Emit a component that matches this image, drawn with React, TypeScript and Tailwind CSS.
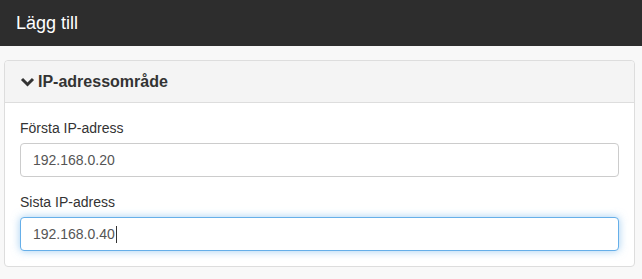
import React from "react";

export default function App() {
  return (
    <div className="w-[642px] h-[279px] bg-[#f8f8f8] text-[#333] overflow-hidden" style={{ fontFamily: '"Liberation Sans", Arial, sans-serif' }}>
      <div className="h-[46px] bg-[#2d2d2d] flex items-center px-4">
        <h1 className="text-white text-[18px] leading-none">Lägg till</h1>
      </div>
      <div className="ml-[4px] mr-[7px] mt-[14px] border border-[#ddd] rounded-[4px] bg-white">
        <div className="h-[42px] bg-[#f4f4f4] border-b border-[#ddd] rounded-t-[4px] flex items-center px-[15px] gap-[3px]">
          <svg width="15" height="12" viewBox="0 0 15 12" className="mt-[1px]">
            <polyline points="2,3 7.5,8.5 13,3" fill="none" stroke="#333" strokeWidth="3" strokeLinecap="butt" strokeLinejoin="miter" />
          </svg>
          <span className="text-[16px] font-bold">IP-adressområde</span>
        </div>
        <div className="px-[15px] pt-[15px] pb-[15px]">
          <label className="block text-[14px] leading-[20px] mb-[5px]">Första IP-adress</label>
          <div className="h-[34px] border border-[#ccc] rounded-[4px] px-[12px] flex items-center text-[14px] text-[#555] bg-white">
            192.168.0.20
          </div>
          <label className="block text-[14px] leading-[20px] mt-[15px] mb-[5px]">Sista IP-adress</label>
          <div className="h-[34px] border border-[#66afe9] rounded-[4px] px-[12px] flex items-center text-[14px] text-[#555] bg-white shadow-[0_0_8px_rgba(102,175,233,0.6)]">
            <span>192.168.0.40</span>
            <span className="inline-block w-[1px] h-[17px] bg-[#333] ml-[1px]" />
          </div>
        </div>
      </div>
    </div>
  );
}
